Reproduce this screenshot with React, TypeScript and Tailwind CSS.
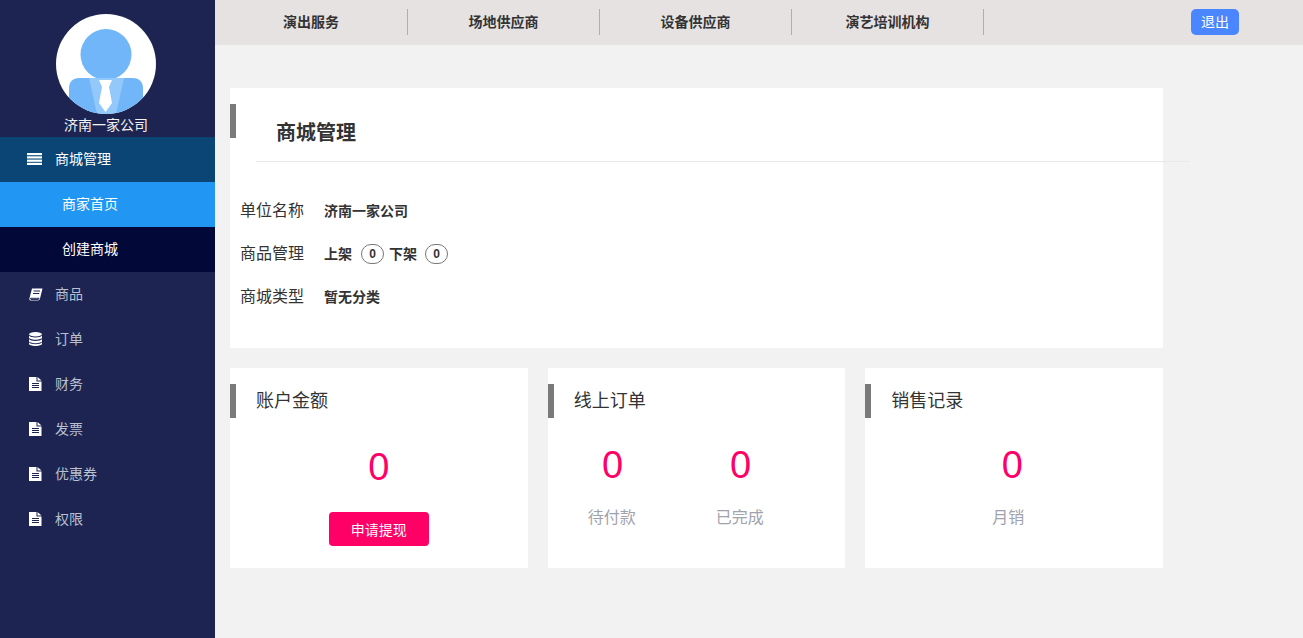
import React from "react";

const font = "font-['Liberation_Sans','Noto_Sans_CJK_SC',sans-serif]";

function BarsIcon() {
  return (
    <svg width="15" height="12" viewBox="0 0 15 12" fill="#fff">
      <rect x="0" y="0" width="15" height="2.2" />
      <rect x="0" y="3.3" width="15" height="2.2" />
      <rect x="0" y="6.6" width="15" height="2.2" />
      <rect x="0" y="9.8" width="15" height="2.2" />
    </svg>
  );
}

function BookIcon() {
  return (
    <svg width="14" height="13" viewBox="0 0 14 13">
      <path d="M3 .5h10.500L11 10.500c-.3 1.300-1 2-2.300 2H1.600C.5 12.500.2 11.600.4 10.600z" fill="#fff" />
      <path d="M4.700 3h6.300M4 5.500h6.300M1.500 10.300h8.500l-.8 1.300H2z" stroke="#1d2451" strokeWidth="1" fill="none" />
    </svg>
  );
}

function DatabaseIcon() {
  return (
    <svg width="13" height="14" viewBox="0 0 13 14" fill="#fff">
      <ellipse cx="6.500" cy="2.200" rx="6.500" ry="2.200" />
      <path d="M0 3.600c1 1.400 3.500 1.900 6.500 1.900s5.500-.5 6.500-1.900v2c0 1.300-2.900 2.200-6.500 2.200S0 6.900 0 5.600z" />
      <path d="M0 7c1 1.400 3.500 1.900 6.500 1.900S12 8.400 13 7v2c0 1.300-2.900 2.200-6.500 2.200S0 10.300 0 9z" />
      <path d="M0 10.300c1 1.400 3.500 1.900 6.500 1.900s5.500-.5 6.500-1.900v1.500c0 1.300-2.900 2.200-6.500 2.200S0 13.100 0 11.800z" />
    </svg>
  );
}

function FileIcon() {
  return (
    <svg width="13" height="14" viewBox="0 0 13 14">
      <path d="M0 0h7.500v4.500H12.500V14H0z" fill="#fff" />
      <path d="M8.500 0l4 3.600h-4z" fill="#fff" />
      <path d="M3 6.500h7M3 8.500h7M3 10.500h7" stroke="#1d2451" strokeWidth="1" />
    </svg>
  );
}

function Avatar() {
  return (
    <svg width="100" height="100" viewBox="0 0 100 100" className="block rounded-full bg-white">
      <circle cx="50" cy="40.500" r="25.500" fill="#70b6f9" />
      <path d="M13 100V74c0-6 4-10 10-10h54c6 0 10 4 10 10v26z" fill="#70b6f9" />
      <path d="M33 64h35l-8 36H41z" fill="#93c8fa" />
      <path d="M43 66h13l-3 7 3 16-6.500 9-6.500-9 3-16z" fill="#fff" />
    </svg>
  );
}

const menu = [
  { label: "商品", icon: <BookIcon /> },
  { label: "订单", icon: <DatabaseIcon /> },
  { label: "财务", icon: <FileIcon /> },
  { label: "发票", icon: <FileIcon /> },
  { label: "优惠券", icon: <FileIcon /> },
  { label: "权限", icon: <FileIcon /> },
];

function Sidebar() {
  return (
    <aside className="w-[215px] shrink-0 bg-[#1d2451] text-sm">
      <div className="flex h-[137px] flex-col items-center pt-[14px] pr-[3px]">
        <Avatar />
        <div className="mt-px text-[#f2f2f2] leading-5">济南一家公司</div>
      </div>
      <div className="flex h-[45px] items-center bg-[#0a4576] pb-[2px] text-white">
        <span className="flex w-[55px] justify-end pr-[13px] pt-px">
          <BarsIcon />
        </span>
        商城管理
      </div>
      <div className="flex h-[45px] items-center bg-[#2196f3] pb-[2px] pl-[62px] text-white">商家首页</div>
      <div className="flex h-[45px] items-center bg-[#020838] pb-[2px] pl-[62px] text-white">创建商城</div>
      {menu.map((m) => (
        <div key={m.label} className="flex h-[45px] items-center pb-[2px] text-[#b9c0d0]">
          <span className="flex w-[55px] justify-center pl-4 pt-px">{m.icon}</span>
          {m.label}
        </div>
      ))}
    </aside>
  );
}

function TopBar() {
  const tabs = ["演出服务", "场地供应商", "设备供应商", "演艺培训机构"];
  return (
    <header className="flex h-[45px] items-start bg-[#e6e2e2] pl-px pt-[9px]">
      {tabs.map((t) => (
        <div
          key={t}
          className="flex h-[26px] w-[192px] items-center justify-center border-r border-[#b0adad] text-sm font-bold text-[#333] first:pr-[1px]"
        >
          {t}
        </div>
      ))}
      <button className="ml-[207px] h-[26px] w-12 rounded-[5px] bg-[#4a86ff] text-sm text-white">退出</button>
    </header>
  );
}

function CardTitle({ children }: { children: React.ReactNode }) {
  return (
    <div className="flex items-center pt-4">
      <span className="h-[34px] w-[6px] bg-[#7a7a7a]" />
      <h3 className="ml-5 text-lg font-normal text-[#333]">{children}</h3>
    </div>
  );
}

function Stat({ value, label, labelClass }: { value: string; label: string; labelClass: string }) {
  return (
    <div className="flex w-32 flex-col items-center">
      <div className="text-[38px] leading-[40px] text-[#ff0066]">{value}</div>
      <div className={`mt-[21px] text-base leading-6 text-[#a0a3ad] ${labelClass}`}>{label}</div>
    </div>
  );
}

function Count({ n, className }: { n: number; className: string }) {
  return (
    <span
      className={`flex h-5 w-[23px] items-center justify-center rounded-full border border-[#777] text-xs font-bold text-[#333] ${className}`}
    >
      {n}
    </span>
  );
}

function Row({ label, children }: { label: string; children: React.ReactNode }) {
  return (
    <div className="flex h-[43px] items-center">
      <span className="w-[84px] text-base text-[#333]">{label}</span>
      <div className="flex items-center text-sm font-bold text-[#333]">{children}</div>
    </div>
  );
}

export default function App() {
  return (
    <div className={`flex h-[638px] w-[1303px] overflow-hidden bg-[#f2f2f2] ${font}`}>
      <Sidebar />
      <main className="flex-1">
        <TopBar />
        <div className="ml-[15px] mt-[43px] w-[933px]">
          <section className="h-[260px] bg-white">
            <div className="flex items-start pt-4">
              <span className="h-[34px] w-[6px] bg-[#7a7a7a]" />
              <h2 className="ml-10 mt-[15px] text-xl font-bold text-[#333]">商城管理</h2>
            </div>
            <div className="ml-[26px] mt-[14px] h-px w-[933px] bg-[#e8e8e8]" />
            <div className="ml-[10px] mt-[27px]">
              <Row label="单位名称">济南一家公司</Row>
              <Row label="商品管理">
                上架
                <Count n={0} className="mx-[9px]" />
                <span className="-ml-[4px]">下架</span>
                <Count n={0} className="ml-2" />
              </Row>
              <Row label="商城类型">暂无分类</Row>
            </div>
          </section>
          <div className="mt-5 flex gap-5">
            <section className="h-[200px] flex-1 bg-white">
              <CardTitle>账户金额</CardTitle>
              <div className="mt-[29px] flex flex-col items-center">
                <div className="text-[38px] leading-[40px] text-[#ff0066]">0</div>
                <button className="mt-[25px] h-[34px] w-[100px] rounded bg-[#ff0066] pt-[2px] text-sm text-white">申请提现</button>
              </div>
            </section>
            <section className="h-[200px] flex-1 bg-white">
              <CardTitle>线上订单</CardTitle>
              <div className="mt-[27px] flex pl-[1px]">
                <Stat value="0" label="待付款" labelClass="pr-[2px]" />
                <Stat value="0" label="已完成" labelClass="pr-[2px]" />
              </div>
            </section>
            <section className="h-[200px] flex-1 bg-white">
              <CardTitle>销售记录</CardTitle>
              <div className="mt-[27px] flex pl-[83px]">
                <Stat value="0" label="月销" labelClass="pr-2" />
              </div>
            </section>
          </div>
        </div>
      </main>
    </div>
  );
}
